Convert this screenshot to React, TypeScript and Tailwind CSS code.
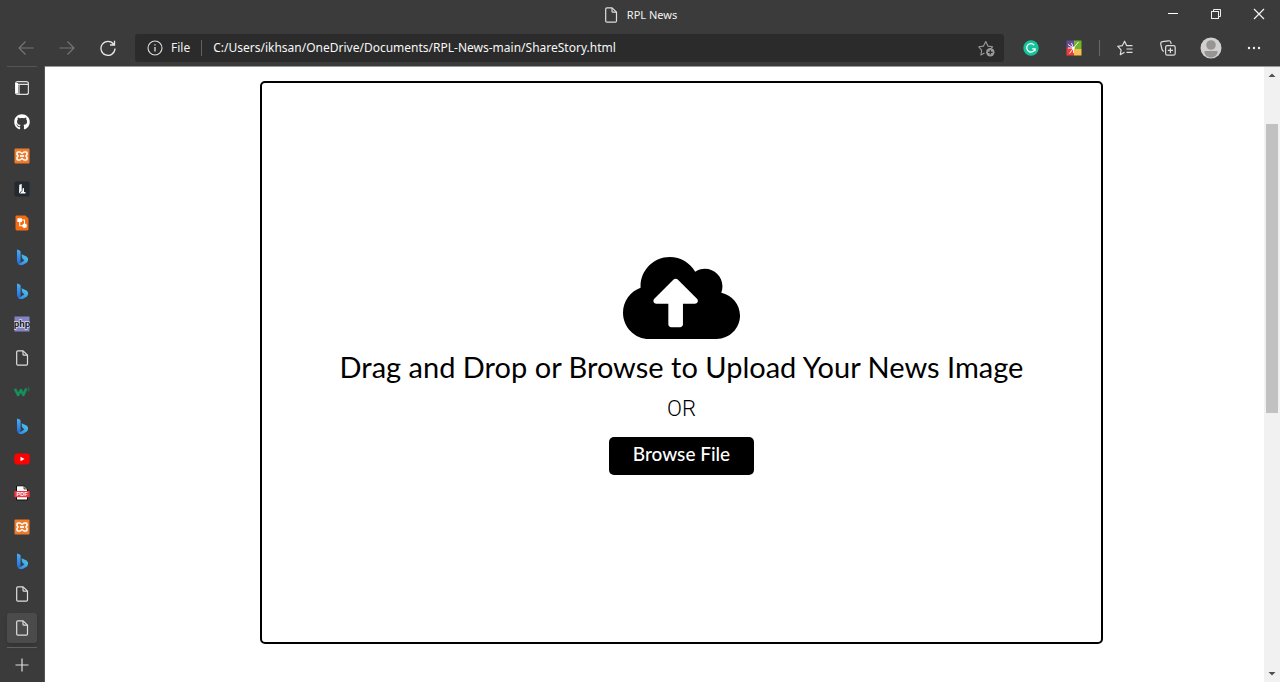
import { useRef, useState } from "react";
import type { ReactNode } from "react";
import { FaCloudUploadAlt, FaGithub } from "react-icons/fa";

const FileIcon = () => (
  <svg className="size-4" viewBox="0 0 16 16" fill="none" stroke="#dedede" strokeWidth="1.2" strokeLinejoin="round">
    <path d="M3.900 .8h5.200l4.400 4.400v8.700c0 .7-.5 1.200-1.200 1.200H3.900c-.7 0-1.200-.5-1.200-1.200V2c0-.7.5-1.200 1.200-1.200z" />
    <path d="M9 1v3.200c0 .6.400 1 1 1h3.300" />
  </svg>
);

const BingIcon = () => (
  <svg className="size-4" viewBox="0 0 16 16">
    <defs>
      <linearGradient id="bing-stem" x1="0" y1="0" x2="0" y2="1">
        <stop offset="0" stopColor="#46b5f7" />
        <stop offset="1" stopColor="#2468e0" />
      </linearGradient>
      <linearGradient id="bing-bowl" x1="0" y1="1" x2="1" y2="0">
        <stop offset="0" stopColor="#2b7df0" />
        <stop offset="1" stopColor="#4ccfe8" />
      </linearGradient>
    </defs>
    <path d="M3 .4l2.700 1c.6.200.9.700.9 1.300v9.800L5.400 14.800C3.900 14.600 3 13.500 3 12z" fill="url(#bing-stem)" />
    <path d="M7.600 5.300l4.300 1.900c1.400.700 2.200 1.900 2.200 3.400 0 1.100-.4 2.100-1.200 2.800l-3.500 2c-2.200 1.200-4.700.7-5.700-.9 1 .2 2-.2 2.900-.8l3.700-2.300-1.500-1.300c-.5-.4-.8-1-.9-1.600z" fill="url(#bing-bowl)" />
  </svg>
);

const XamppIcon = () => (
  <svg className="size-4" viewBox="0 0 16 16">
    <rect x=".5" y=".5" width="15" height="15" rx="1" fill="#ee7a2b" />
    <path d="M4 4h2l2 1.500L10 4h2c.6 0 1 .4 1 1v1.700L11.800 8 13 9.300V11c0 .6-.4 1-1 1h-2l-2-1.500L6 12H4c-.6 0-1-.4-1-1V9.300L4.200 8 3 6.700V5c0-.6.4-1 1-1z" fill="none" stroke="#fff" strokeWidth="1.500" strokeLinejoin="round" />
    <path d="M6 8h4" stroke="#fff" strokeWidth="1.700" />
  </svg>
);

const tabs: { name: string; icon: ReactNode }[] = [
  {
    name: "Tab actions menu",
    icon: (
      <svg className="size-4" viewBox="0 0 16 16" fill="none" stroke="#dedede" strokeWidth="1.200">
        <rect x="1.600" y="1.600" width="12.800" height="12.800" rx="2" />
        <path d="M1.600 4.300H14M5 4.300v10" />
        <path d="M2.700 3v10.500" stroke="#fff" strokeWidth="2.600" />
      </svg>
    ),
  },
  { name: "GitHub", icon: <FaGithub className="size-4 text-white" /> },
  { name: "XAMPP", icon: <XamppIcon /> },
  {
    name: "Lumen",
    icon: (
      <svg className="size-4" viewBox="0 0 16 16">
        <rect x=".5" y=".5" width="15" height="15" rx="1.500" fill="#22292f" />
        <path d="M5.300 3.800l2.400-.8v7.500h-1l-1.700 2z" fill="#fff" />
        <path d="M8.500 7.500l1.500-.6V11h1.500v1.500H5.500L8.500 10z" fill="#fff" />
      </svg>
    ),
  },
  {
    name: "Diagrams",
    icon: (
      <svg className="size-4" viewBox="0 0 16 16">
        <path d="M2.800.5h8.600l3.100 3.100v10.400c0 .8-.7 1.500-1.500 1.500H3c-.8 0-1.500-.7-1.500-1.500V1.800c0-.8.500-1.300 1.300-1.300z" fill="#f36b12" />
        <rect x="3.300" y="3.300" width="4.700" height="3.700" rx=".6" fill="#fff" />
        <circle cx="10.600" cy="10.700" r="2.300" fill="#fff" />
        <path d="M5.700 6v4.700H9M7.500 5h3v4" fill="none" stroke="#fff" strokeWidth="1.100" />
      </svg>
    ),
  },
  { name: "Bing search", icon: <BingIcon /> },
  { name: "Bing results", icon: <BingIcon /> },
  {
    name: "phpMyAdmin",
    icon: (
      <svg className="size-4" viewBox="0 0 16 16">
        <rect x=".5" y=".5" width="15" height="15" fill="#8484c4" />
        <text x="8" y="10.500" textAnchor="middle" fontSize="9" fontFamily="Liberation Sans" fontWeight="bold" fill="#111" stroke="#ddddf2" strokeWidth="1.400" paintOrder="stroke">php</text>
      </svg>
    ),
  },
  { name: "Local page", icon: <FileIcon /> },
  {
    name: "W3Schools",
    icon: (
      <svg className="size-4" viewBox="0 0 16 16" fill="none" stroke="#14915b">
        <path d="M1 4.800l3 6.200 3-5 2.300 5 3-6.500" strokeWidth="2.600" strokeLinejoin="round" />
        <path d="M13.700 3.500c1.800 0 1.800 1.500.4 1.700 1.700.1 1.400 2-.4 1.700" strokeWidth=".7" />
      </svg>
    ),
  },
  { name: "Bing images", icon: <BingIcon /> },
  {
    name: "YouTube",
    icon: (
      <svg className="size-4" viewBox="0 0 16 16">
        <rect x=".3" y="2.500" width="15.400" height="11" rx="3" fill="#f00" />
        <path d="M6.500 5.700v4.600L10.500 8z" fill="#fff" />
      </svg>
    ),
  },
  {
    name: "PDF",
    icon: (
      <svg className="size-4" viewBox="0 0 16 16">
        <path d="M2.500.8h7.700L13.500 4v11h-11z" fill="#fff" stroke="#111" strokeWidth="1" />
        <path d="M10 .8V4h3.500z" fill="#ccc" stroke="#111" strokeWidth=".7" />
        <rect x=".3" y="6" width="15.400" height="6.200" rx=".8" fill="#ed3942" />
        <text x="8" y="11" textAnchor="middle" fontSize="5.500" fontWeight="bold" fontFamily="Liberation Sans" fill="#fff">PDF</text>
      </svg>
    ),
  },
  { name: "XAMPP dashboard", icon: <XamppIcon /> },
  { name: "Bing videos", icon: <BingIcon /> },
  { name: "RPL News home", icon: <FileIcon /> },
  { name: "RPL News", icon: <FileIcon /> },
];

function NavButton({ label, children }: { label: string; children: ReactNode }) {
  return (
    <button type="button" aria-label={label} className="flex h-7 w-[41px] shrink-0 items-center justify-center">
      {children}
    </button>
  );
}

function BarButton({ label, children }: { label: string; children: ReactNode }) {
  return (
    <button type="button" aria-label={label} className="flex h-7 w-[43px] shrink-0 items-center justify-center">
      {children}
    </button>
  );
}

function TitleBar() {
  return (
    <header className="grid h-[30px] shrink-0 grid-cols-[1fr_auto_1fr] items-center">
      <div className="col-start-2 flex items-center gap-2">
        <FileIcon />
        <span className="text-[11px] leading-4 text-[#f2f2f2]">RPL News</span>
      </div>
      <div className="flex h-full items-start justify-end">
        <BarButton label="Minimize">
          <svg className="size-3" viewBox="0 0 12 12" stroke="#fff"><path d="M1 5.500h10" /></svg>
        </BarButton>
        <BarButton label="Restore">
          <svg className="size-3" viewBox="0 0 12 12" fill="none" stroke="#eee">
            <rect x="1.500" y="3.500" width="7" height="7" />
            <path d="M3.500 3.500v-2h7v7h-2" />
          </svg>
        </BarButton>
        <BarButton label="Close">
          <svg className="size-3" viewBox="0 0 12 12" stroke="#f2f2f2" strokeWidth="1.200"><path d="M1 1l10 10M11 1L1 11" /></svg>
        </BarButton>
      </div>
    </header>
  );
}

function Toolbar() {
  return (
    <div className="flex h-9 shrink-0 items-center pr-[5px] pl-[5px]">
      <NavButton label="Back">
        <svg className="size-4" viewBox="0 0 16 16" fill="none" stroke="#777" strokeWidth="1.100"><path d="M15.500 8H1M7.500 1.500L1 8l6.500 6.500" /></svg>
      </NavButton>
      <NavButton label="Forward">
        <svg className="size-4" viewBox="0 0 16 16" fill="none" stroke="#777" strokeWidth="1.100"><path d="M.5 8H15M8.500 1.500L15 8l-6.500 6.500" /></svg>
      </NavButton>
      <NavButton label="Refresh">
        <svg className="size-4" viewBox="0 0 16 16" fill="none" stroke="#e6e6e6" strokeWidth="1.300">
          <path d="M13.700 4.300A7 7 0 1 0 15 8.500M14.500.8v4.200H10" />
        </svg>
      </NavButton>
      <form className="mr-[5px] ml-[7px] flex h-7 min-w-0 flex-1 items-center rounded-[3px] bg-[#2b2b2b] pl-3" onSubmit={(e) => e.preventDefault()}>
        <button type="button" className="flex items-center gap-2 text-xs text-[#f2f2f2]">
          <svg className="size-4" viewBox="0 0 16 16" fill="none" stroke="#dedede" strokeWidth="1.100">
            <circle cx="8" cy="8" r="7" />
            <path d="M8 7v4.500M8 4.300v1.300" strokeWidth="1.300" />
          </svg>
          File
        </button>
        <span className="mx-[11px] h-4 w-px bg-[#606060]" />
        <input
          aria-label="Address"
          defaultValue="C:/Users/ikhsan/OneDrive/Documents/RPL-News-main/ShareStory.html"
          className="min-w-0 flex-1 bg-transparent text-xs text-[#f7f7f7] outline-none"
        />
        <button type="button" aria-label="Add to favorites" className="flex h-7 w-9 items-center justify-center">
          <svg className="size-[17px]" viewBox="0 0 17 17" fill="none" stroke="#999" strokeWidth="1.100" strokeLinejoin="round">
            <path d="M6.500 13.100l-3.600 1.900.7-4.800L.8 6.800l4.700-.7 2.300-4.500 2.100 4.500 4.700.7-1.300 1.300" />
            <circle cx="12.300" cy="12.300" r="4.200" fill="#999" stroke="none" />
            <path d="M12.300 10v4.600M10 12.300h4.600" stroke="#2b2b2b" strokeWidth="1.200" />
          </svg>
        </button>
      </form>
      <BarButton label="Grammarly">
        <svg className="size-4" viewBox="0 0 16 16" fill="none" stroke="#fff" strokeWidth="1.300">
          <circle cx="8" cy="8" r="7.700" fill="#15c39a" stroke="none" />
          <path d="M11.200 5.200A4.200 4.200 0 1 0 12 8.800H9.200M12 8.500v2.700" />
        </svg>
      </BarButton>
      <BarButton label="Color extension">
        <svg className="size-4" viewBox="0 0 16 16">
          <path d="M.5.500H9v7.500H.5z" fill="#684b97" />
          <path d="M8 .5h7.500V9H8z" fill="#70b52c" />
          <path d="M.5 7.500H8v8H.5z" fill="#ea3e3c" />
          <path d="M8 9h7.500v6.500H8z" fill="#f7bf4e" />
          <path d="M7.500 8L2 4.500M7.500 8l-2-5M7.500 8l5-6M7.500 8l-4 5.500M7.500 8H2M7.500 8v5" stroke="#fff" strokeWidth=".9" />
          <circle cx="7.500" cy="8" r="1.300" fill="#fff" />
        </svg>
      </BarButton>
      <span className="flex w-2 justify-center"><span className="h-4 w-px bg-[#686868]" /></span>
      <BarButton label="Favorites">
        <svg className="size-4" viewBox="0 0 16 16" fill="none" stroke="#dedede" strokeWidth="1.200" strokeLinejoin="round">
          <path d="M7.500 12.300l-4.200 2.400.8-4.900L.8 6.300l4.600-.7 2.200-4.400 2 4.400H15.500M9.500 9h6M9.500 12.400h6" />
        </svg>
      </BarButton>
      <BarButton label="Collections">
        <svg className="size-4" viewBox="0 0 16 16" fill="none" stroke="#dedede" strokeWidth="1.200" strokeLinejoin="round">
          <rect x="5.600" y="5.600" width="9.600" height="9.600" rx="1.800" />
          <path d="M10.400 7.800v5.200M7.800 10.400H13M3.800 11.500C2.600 11 2.200 10.200 1.900 9L.8 4.300C.5 3 1.100 2 2.300 1.700L8.500.8c1.200-.2 2 .4 2.300 1.500l.4 1.500" />
        </svg>
      </BarButton>
      <BarButton label="Profile">
        <svg className="size-[22px]" viewBox="0 0 22 22">
          <circle cx="11" cy="11" r="10.500" fill="#d2d0ce" />
          <circle cx="11" cy="8" r="4.800" fill="#979593" />
          <path d="M4.500 14h13c.5 4-3 6.500-6.500 6.500S4 18 4.500 14z" fill="#979593" />
        </svg>
      </BarButton>
      <BarButton label="Settings and more">
        <svg className="size-4" viewBox="0 0 16 16" fill="#eee">
          <circle cx="3" cy="8" r="1.200" /><circle cx="8" cy="8" r="1.200" /><circle cx="13" cy="8" r="1.200" />
        </svg>
      </BarButton>
    </div>
  );
}

function Sidebar() {
  const [active, setActive] = useState(tabs.length - 1);
  return (
    <nav aria-label="Tabs" className="flex w-[45px] shrink-0 flex-col items-center border-r border-[#555]">
      <span className="h-px w-[30px] shrink-0 bg-[#555]" />
      <ul className="flex min-h-0 flex-1 flex-col justify-between pt-[6px] pb-1">
        {tabs.map((tab, i) => (
          <li key={tab.name}>
            <button
              type="button"
              aria-label={tab.name}
              onClick={() => setActive(i)}
              className={i === active ? "flex size-[30px] items-center justify-center rounded-[3px] bg-[#4b4b4b] shadow-md" : "flex size-[30px] items-center justify-center rounded-[3px]"}
            >
              {tab.icon}
            </button>
          </li>
        ))}
      </ul>
      <span className="h-px w-[30px] shrink-0 bg-[#606060]" />
      <button type="button" aria-label="New tab" className="flex h-[34px] w-[30px] shrink-0 items-center justify-center">
        <svg className="size-4" viewBox="0 0 16 16" stroke="#dedede" strokeWidth="1.200"><path d="M8 1.500v13M1.500 8h13" /></svg>
      </button>
    </nav>
  );
}

function UploadCard() {
  const picker = useRef<HTMLInputElement>(null);
  return (
    <section className="col-start-2 flex flex-col items-center justify-center rounded-[5px] border-2 border-black text-black">
      <FaCloudUploadAlt className="h-[94px] w-[117px]" />
      <h1 className="mt-1 font-['Lato',sans-serif] text-[29px] leading-9 whitespace-nowrap">
        Drag and Drop or Browse to Upload Your News Image
      </h1>
      <span className="mt-2 font-['Roboto',sans-serif] text-[22px] leading-8 font-light">OR</span>
      <input ref={picker} type="file" accept="image/*" aria-label="News image" className="hidden" />
      <button
        type="button"
        onClick={() => picker.current?.click()}
        className="mt-3 h-[38px] rounded-[5px] bg-black px-6 pb-1 font-['Lato',sans-serif] text-[19px] leading-6 font-medium text-white"
      >
        Browse File
      </button>
    </section>
  );
}

function ScrollTrack() {
  return (
    <div aria-hidden="true" className="flex w-4 shrink-0 flex-col items-center bg-[#f1f1f1]">
      <svg className="h-4 w-4 shrink-0" viewBox="0 0 16 16" fill="#505050"><path d="M4.500 10L8 6.500l3.500 3.500z" /></svg>
      <div className="flex w-full flex-1 flex-col px-0.5">
        <span className="grow-[41]" />
        <span className="grow-[289] bg-[#c1c1c1]" />
        <span className="grow-[253]" />
      </div>
      <svg className="h-4 w-4 shrink-0" viewBox="0 0 16 16" fill="#505050"><path d="M4.500 6L8 9.500 11.500 6z" /></svg>
    </div>
  );
}

export default function App() {
  return (
    <div className="flex h-screen flex-col overflow-hidden bg-[#3b3b3b] font-['Noto_Sans',sans-serif]">
      <TitleBar />
      <Toolbar />
      <div className="flex min-h-0 flex-1">
        <Sidebar />
        <div className="flex min-w-0 flex-1 border-t border-[#999] bg-white">
          <main className="grid min-w-0 flex-1 grid-cols-[215fr_843fr_161fr] pt-[14px] pb-[38px]">
            <UploadCard />
          </main>
          <ScrollTrack />
        </div>
      </div>
    </div>
  );
}
